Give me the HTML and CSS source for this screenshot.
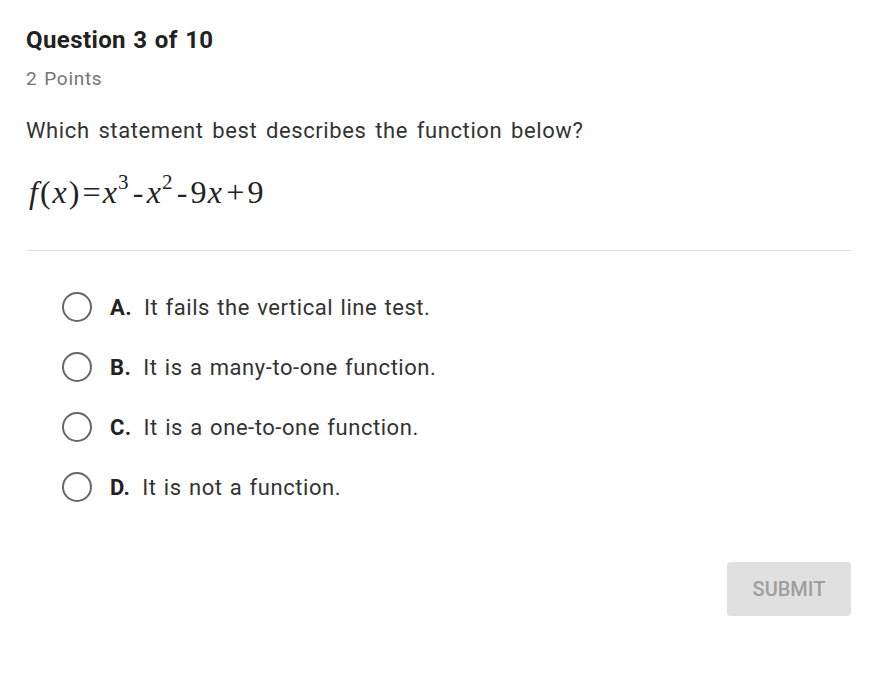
FILE: index.html
```html
<!DOCTYPE html>
<html>
<head>
<meta charset="utf-8">
<link rel="stylesheet" href="styles.css">
</head>
<body>
<div class="page">
  <h1 class="title">Question 3 of 10</h1>
  <div class="points">2 Points</div>
  <p class="prompt">Which statement best describes the function below?</p>
  <div class="formula"><span class="fn"><i>f</i>(<i>x</i>)</span><span class="eq">=</span><i>x</i><sup>3</sup><span class="op">-</span><i>x</i><sup>2</sup><span class="op">-</span>9<i>x</i><span class="op plus">+</span>9</div>
  <hr class="divider">
  <ul class="options">
    <li class="option"><span class="radio"></span><b class="letter">A.</b><span class="text">It fails the vertical line test.</span></li>
    <li class="option"><span class="radio"></span><b class="letter">B.</b><span class="text">It is a many-to-one function.</span></li>
    <li class="option"><span class="radio"></span><b class="letter">C.</b><span class="text">It is a one-to-one function.</span></li>
    <li class="option"><span class="radio"></span><b class="letter">D.</b><span class="text">It is not a function.</span></li>
  </ul>
  <div class="actions"><button class="submit">SUBMIT</button></div>
</div>
</body>
</html>
```

FILE: styles.css
```css
* { box-sizing: border-box; }
body {
  margin: 0;
  background: #fff;
  font-family: Roboto, "Liberation Sans", sans-serif;
  color: #212121;
}
.page {
  padding: 24px 45px 0 26px;
}
.title {
  margin: 0;
  font-size: 24px;
  font-weight: 700;
  line-height: 32px;
  letter-spacing: 0.4px;
  word-spacing: 1px;
  color: #212121;
}
.points {
  margin-top: 11px;
  font-size: 19px;
  line-height: 24px;
  letter-spacing: 0.7px;
  word-spacing: 1.5px;
  color: #757575;
}
.prompt {
  margin: 26px 0 0;
  font-size: 22px;
  line-height: 28px;
  letter-spacing: 0.6px;
  word-spacing: 2.7px;
  color: #333;
}
.formula {
  margin-top: 29px;
  padding-left: 3px;
  font-family: "Liberation Serif", "Times New Roman", serif;
  font-size: 32px;
  line-height: 36px;
  letter-spacing: 1.2px;
  color: #222;
}
.formula .fn { letter-spacing: 2px; }
.formula sup {
  font-size: 21px;
  vertical-align: 14px;
  line-height: 0;
}
.formula .eq { padding: 0 1px; }
.formula .op { padding: 0 2px 0 3px; }
.formula .plus { padding: 0 2px 0 3px; }
.divider {
  margin: 40px 0 0;
  border: 0;
  border-top: 1px solid #e0e0e0;
}
.options {
  list-style: none;
  margin: 26px 0 0;
  padding: 0 0 0 36px;
}
.option {
  display: flex;
  align-items: center;
  height: 60px;
  font-size: 22px;
  letter-spacing: 0.55px;
  word-spacing: 1.3px;
  color: #333;
}
.radio {
  width: 30px;
  height: 30px;
  border: 2.5px solid #666;
  border-radius: 50%;
  margin-right: 18px;
  flex: none;
}
.letter {
  font-weight: 700;
  color: #222;
  margin-right: 12px;
  letter-spacing: 0.4px;
}
.actions {
  display: flex;
  justify-content: flex-end;
  margin-top: 45px;
}
.submit {
  width: 124px;
  height: 54px;
  border: 0;
  border-radius: 4px;
  background: #e0e0e0;
  color: #9e9e9e;
  font-family: Roboto, "Liberation Sans", sans-serif;
  font-size: 20px;
  font-weight: 500;
}
```
